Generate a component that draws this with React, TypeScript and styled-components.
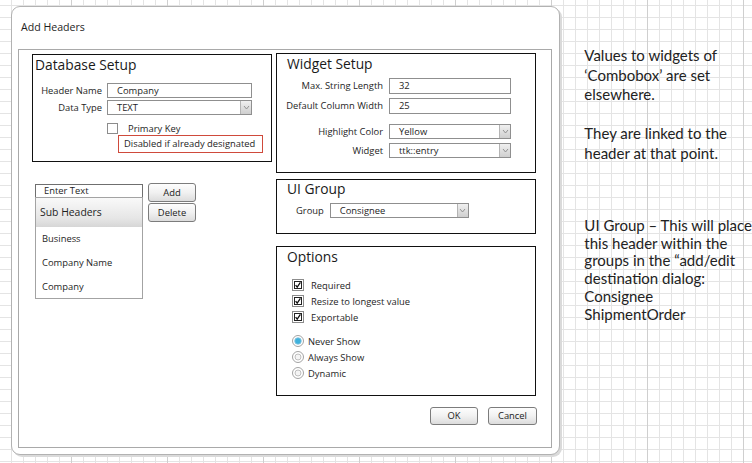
import styled, { createGlobalStyle } from "styled-components";

const GlobalStyle = createGlobalStyle`
  html, body {
    margin: 0;
    padding: 0;
  }
  body {
    width: 752px;
    height: 463px;
    overflow: hidden;
    font-family: "Open Sans", "Noto Sans", sans-serif;
    color: #1e1e1e;
    background-color: #ffffff;
    background-image:
      linear-gradient(to right, #cfcfcf 1px, transparent 1px),
      linear-gradient(to right, #e4e4e4 1px, transparent 1px),
      linear-gradient(to bottom, #e4e4e4 1px, transparent 1px);
    background-size: 96px 100%, 12px 12px, 12px 12px;
    background-position: 71px 0, 11px 0, 0 5px;
  }
`;

function Chevron() {
  return (
    <svg width="7" height="5" viewBox="0 0 7 5">
      <path d="M1 1 L3.5 4 L6 1" fill="none" stroke="#8a8a8a" strokeWidth="0.9" />
    </svg>
  );
}

function CheckedBox() {
  return (
    <svg width="12" height="12" viewBox="0 0 12 12">
      <rect x="0.5" y="0.5" width="11" height="11" fill="#fff" stroke="#8c8c8c" />
      <rect x="2.5" y="2.5" width="7" height="7" fill="#fff" stroke="#222" />
      <path d="M3.6 6.1 L5.2 8.1 L8.4 3.4" fill="none" stroke="#111" strokeWidth="1.3" />
    </svg>
  );
}

function Radio({ on }: { on?: boolean }) {
  return (
    <svg width="12" height="12" viewBox="0 0 12 12">
      <circle cx="6" cy="6" r="5.5" fill="#fff" stroke="#a3a3a3" />
      {on ? (
        <circle cx="6" cy="6" r="3.3" fill="#3fb1dc" stroke="#8bc7de" strokeWidth="0.8" />
      ) : (
        <circle cx="6" cy="6" r="3" fill="#f4f4f4" stroke="#b0b0b0" strokeWidth="0.8" />
      )}
    </svg>
  );
}

function Select({ value, width }: { value: string; width: number }) {
  return (
    <InputBox $width={width}>
      {value}
      <DropButton>
        <Chevron />
      </DropButton>
    </InputBox>
  );
}

export default function App() {
  return (
    <>
      <GlobalStyle />
      <Page>
        <Dialog>
          <DialogTitle>Add Headers</DialogTitle>
          <Panel>
            <LeftColumn>
              <GroupBox $height={108}>
                <BoxTitle $indent={2}>Database Setup</BoxTitle>
                <FormGrid $label={69} $gap={5} $top={8} $rowGap={2}>
                  <FieldLabel>Header Name</FieldLabel>
                  <InputBox $width={145}>Company</InputBox>
                  <FieldLabel>Data Type</FieldLabel>
                  <Select value="TEXT" width={145} />
                  <span />
                  <div>
                    <CheckRow>
                      <EmptyBox />
                      Primary Key
                    </CheckRow>
                    <Warning>Disabled if already designated</Warning>
                  </div>
                </FormGrid>
              </GroupBox>

              <ListArea>
                <ListBlock>
                  <EnterText>Enter Text</EnterText>
                  <ListBox>
                    <ListHeader>Sub Headers</ListHeader>
                    <ListItem>Business</ListItem>
                    <ListItem>Company Name</ListItem>
                    <ListItem>Company</ListItem>
                  </ListBox>
                </ListBlock>
                <ButtonStack>
                  <PushButton $width={48} $height={19}>Add</PushButton>
                  <PushButton $width={48} $height={19}>Delete</PushButton>
                </ButtonStack>
              </ListArea>
            </LeftColumn>

            <RightColumn>
              <GroupBox $height={120}>
                <BoxTitle $indent={10}>Widget Setup</BoxTitle>
                <FormGrid $label={106} $gap={6} $top={4} $rowGap={4}>
                  <FieldLabel>Max. String Length</FieldLabel>
                  <InputBox $width={122} $height={16}>32</InputBox>
                  <FieldLabel>Default Column Width</FieldLabel>
                  <InputBox $width={122} $height={16}>25</InputBox>
                </FormGrid>
                <FormGrid $label={106} $gap={6} $top={10} $rowGap={4}>
                  <FieldLabel>Highlight Color</FieldLabel>
                  <Select value="Yellow" width={122} />
                  <FieldLabel>Widget</FieldLabel>
                  <Select value="ttk::entry" width={122} />
                </FormGrid>
              </GroupBox>

              <GroupBox $height={55} $top={6}>
                <BoxTitle $indent={10} $line={18}>UI Group</BoxTitle>
                <GroupRow>
                  <FieldLabel>Group</FieldLabel>
                  <Select value="Consignee" width={139} />
                </GroupRow>
              </GroupBox>

              <GroupBox $height={150} $top={12}>
                <BoxTitle $indent={10}>Options</BoxTitle>
                <OptionList $top={10}>
                  <OptionRow $gap={7}>
                    <CheckedBox />
                    Required
                  </OptionRow>
                  <OptionRow $gap={7}>
                    <CheckedBox />
                    Resize to longest value
                  </OptionRow>
                  <OptionRow $gap={7}>
                    <CheckedBox />
                    Exportable
                  </OptionRow>
                </OptionList>
                <OptionList $top={8}>
                  <OptionRow $gap={4}>
                    <Radio on />
                    Never Show
                  </OptionRow>
                  <OptionRow $gap={4}>
                    <Radio />
                    Always Show
                  </OptionRow>
                  <OptionRow $gap={4}>
                    <Radio />
                    Dynamic
                  </OptionRow>
                </OptionList>
              </GroupBox>

              <DialogButtons>
                <PushButton $width={48} $height={18}>OK</PushButton>
                <PushButton $width={49} $height={18}>Cancel</PushButton>
              </DialogButtons>
            </RightColumn>
          </Panel>
        </Dialog>

        <Notes>
          <Note $lh={19.5}>
            <NotePara>
              Values to widgets of
              <br />
              ‘Combobox’ are set
              <br />
              elsewhere.
            </NotePara>
            <NotePara>
              They are linked to the
              <br />
              header at that point.
            </NotePara>
          </Note>
          <Note $lh={17.7} $top={54}>
            <NotePara>
              UI Group – This will place
              <br />
              this header within the
              <br />
              groups in the “add/edit
              <br />
              destination dialog:
              <br />
              Consignee
              <br />
              ShipmentOrder
            </NotePara>
          </Note>
        </Notes>
      </Page>
    </>
  );
}

const Page = styled.div`
  display: flex;
  align-items: flex-start;
  box-sizing: border-box;
  height: 463px;
  padding: 6px 0 0 11px;
`;

const Dialog = styled.div`
  display: flex;
  flex-direction: column;
  box-sizing: border-box;
  width: 552px;
  height: 449px;
  padding: 0 7px 6px 6px;
  background: #ffffff;
  border: 1px solid #b2b2b2;
  border-radius: 9px;
  box-shadow: 2px 2px 0 #dadada;
`;

const DialogTitle = styled.div`
  box-sizing: border-box;
  height: 42px;
  padding: 13px 0 0 3px;
  font-size: 10.6px;
  line-height: 14px;
`;

const Panel = styled.div`
  flex: 1;
  display: flex;
  align-items: flex-start;
  gap: 4px;
  padding: 3px 0 0 13px;
  border: 1px solid #a9a9a9;
`;

const LeftColumn = styled.div`
  display: flex;
  flex-direction: column;
  width: 240px;
  padding-top: 1px;
`;

const RightColumn = styled.div`
  display: flex;
  flex-direction: column;
  width: 260px;
`;

const GroupBox = styled.div<{ $height: number; $top?: number }>`
  box-sizing: border-box;
  height: ${(p) => p.$height}px;
  margin-top: ${(p) => p.$top ?? 0}px;
  border: 1px solid #111;
`;

const BoxTitle = styled.div<{ $indent: number; $line?: number }>`
  padding-left: ${(p) => p.$indent}px;
  font-size: 13.8px;
  line-height: ${(p) => p.$line ?? 20}px;
  color: #1a1a1a;
`;

const FormGrid = styled.div<{ $label: number; $gap: number; $top: number; $rowGap: number }>`
  display: grid;
  grid-template-columns: ${(p) => p.$label}px auto;
  column-gap: ${(p) => p.$gap}px;
  row-gap: ${(p) => p.$rowGap}px;
  align-items: center;
  margin-top: ${(p) => p.$top}px;
`;

const FieldLabel = styled.span`
  font-size: 9.4px;
  line-height: 12px;
  text-align: right;
  white-space: nowrap;
`;

const InputBox = styled.div<{ $width: number; $height?: number }>`
  position: relative;
  box-sizing: border-box;
  width: ${(p) => p.$width}px;
  height: ${(p) => p.$height ?? 15}px;
  padding-left: 9px;
  border: 1px solid #8f8f8f;
  background: #fff;
  font-size: 9.4px;
  line-height: ${(p) => (p.$height ?? 15) - 2}px;
  white-space: nowrap;
`;

const DropButton = styled.span`
  position: absolute;
  top: 0;
  right: 0;
  bottom: 0;
  width: 10px;
  display: flex;
  align-items: center;
  justify-content: center;
  border-left: 1px solid #b4b4b4;
  background: linear-gradient(#f0f0f0, #cfcfcf);
`;

const CheckRow = styled.div`
  display: flex;
  align-items: center;
  gap: 10px;
  margin-top: 5px;
  height: 12px;
  font-size: 9.4px;
`;

const EmptyBox = styled.span`
  box-sizing: border-box;
  width: 11px;
  height: 11px;
  border: 1px solid #8c8c8c;
  background: #fff;
`;

const Warning = styled.div`
  box-sizing: border-box;
  width: 145px;
  height: 18px;
  margin: 1px 0 0 11px;
  padding-left: 5px;
  border: 1px solid #cf4a3b;
  font-size: 9.4px;
  line-height: 16px;
  white-space: nowrap;
`;

const ListArea = styled.div`
  display: flex;
  align-items: flex-start;
  gap: 5px;
  margin: 21px 0 0 3px;
`;

const ListBlock = styled.div`
  width: 108px;
  padding-top: 1px;
`;

const EnterText = styled.div`
  box-sizing: border-box;
  height: 14px;
  padding-left: 8px;
  border: 1px solid #6f6f6f;
  font-size: 9.4px;
  line-height: 12px;
`;

const ListBox = styled.div`
  box-sizing: border-box;
  height: 102px;
  margin-top: -1px;
  border: 1px solid #a3a3a3;
`;

const ListHeader = styled.div`
  height: 29px;
  padding-left: 4px;
  background: linear-gradient(#f9f9f9, #e6e6e6 70%, #d6d6d6);
  font-size: 10.4px;
  line-height: 29px;
`;

const ListItem = styled.div`
  height: 24px;
  padding-left: 6px;
  font-size: 9.4px;
  line-height: 24px;
`;

const ButtonStack = styled.div`
  display: flex;
  flex-direction: column;
  gap: 1px;
`;

const PushButton = styled.button<{ $width: number; $height: number }>`
  box-sizing: border-box;
  width: ${(p) => p.$width}px;
  height: ${(p) => p.$height}px;
  padding: 0;
  border: 1px solid #7c7c7c;
  border-radius: 3px;
  background: linear-gradient(#fdfdfd, #f1f1f1 50%, #dcdcdc);
  font-family: inherit;
  font-size: 9.4px;
  line-height: 14px;
  color: #222;
`;

const GroupRow = styled.div`
  display: flex;
  align-items: center;
  gap: 6px;
  margin-top: 5px;
  padding-left: 19px;
`;

const OptionList = styled.div<{ $top: number }>`
  display: flex;
  flex-direction: column;
  margin-top: ${(p) => p.$top}px;
  padding-left: 15px;
`;

const OptionRow = styled.div<{ $gap: number }>`
  display: flex;
  align-items: center;
  gap: ${(p) => p.$gap}px;
  height: 16px;
  font-size: 9.4px;
`;

const DialogButtons = styled.div`
  display: flex;
  justify-content: flex-end;
  gap: 10px;
  margin-top: 11px;
  margin-right: -1px;
`;

const Notes = styled.div`
  margin: 40px 0 0 24px;
  font-family: Lato, "Open Sans", sans-serif;
  font-size: 15px;
  color: #222;
  white-space: nowrap;
`;

const Note = styled.div<{ $lh: number; $top?: number }>`
  margin-top: ${(p) => p.$top ?? 0}px;
  line-height: ${(p) => p.$lh}px;
`;

const NotePara = styled.p`
  margin: 0 0 1.3em 0;
  &:last-child {
    margin-bottom: 0;
  }
`;
